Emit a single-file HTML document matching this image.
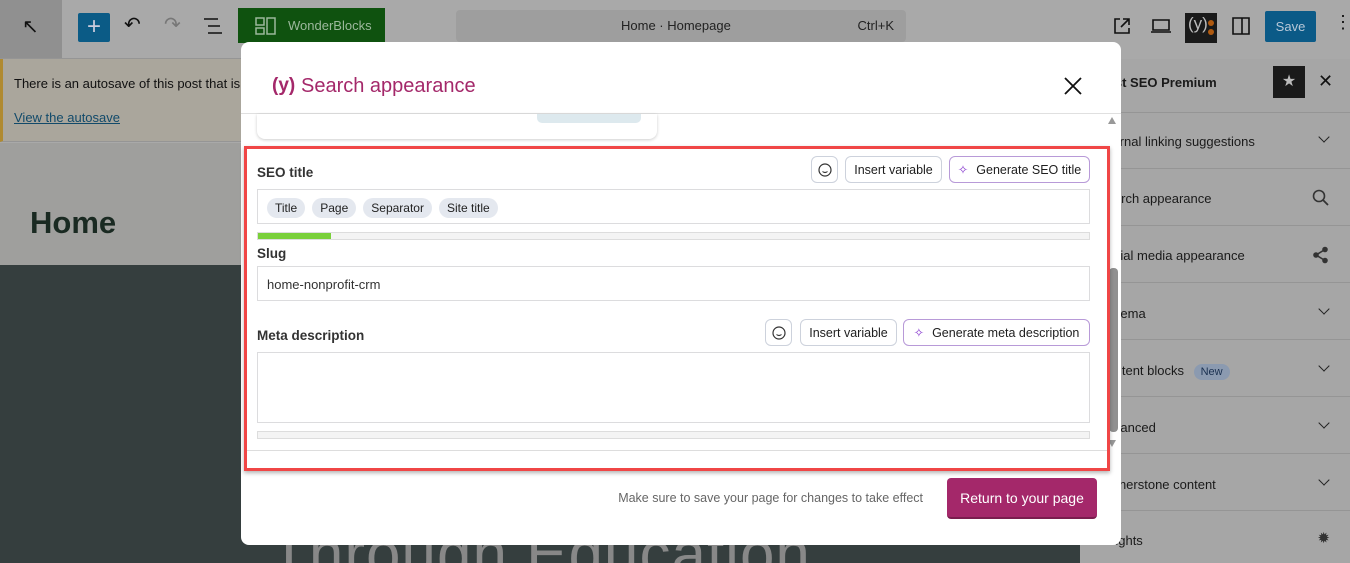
<!DOCTYPE html>
<html><head><meta charset="utf-8"><style>
*{box-sizing:border-box;margin:0;padding:0}
html,body{width:1350px;height:563px;overflow:hidden}
body{position:relative;font-family:"Liberation Sans",sans-serif;background:#a9a9a9;color:#1e1e1e}
.abs{position:absolute}
.sb-row{position:absolute;left:1080px;width:270px;border-top:1px solid #959595;font-size:13px;color:#1a1a1a}
.sb-row span{position:absolute;left:18px;white-space:nowrap}
.chev{position:absolute;right:22px;width:8px;height:8px;border-right:1.6px solid #222;border-bottom:1.6px solid #222;transform:rotate(45deg)}
.btn{position:absolute;border:1px solid #cdd2dc;border-radius:6px;background:#fff;font-size:12.5px;color:#1e1e1e;display:flex;align-items:center;justify-content:center;height:27px}
.lbl{position:absolute;left:257px;font-size:13.5px;font-weight:bold;color:#333}
.inp{position:absolute;left:257px;width:833px;border:1px solid #dcdcde;background:#fff}
.bar{position:absolute;left:257px;width:833px;height:8px;border:1px solid #ddd;background:#f4f4f4}
.pill{display:inline-block;background:#e4e8ef;border-radius:10px;padding:3px 8px;font-size:12px;margin-right:7px;color:#222}
</style></head><body>
<!-- top bar -->
<div class="abs" style="left:0;top:0;width:62px;height:58px;background:#909090"></div>
<div class="abs" style="left:22px;top:14px;font-size:20px;color:#111">↖</div>
<div class="abs" style="left:78px;top:13px;width:32px;height:29px;background:#0b5b86;border-radius:2px;color:#ccd;font-size:24px;text-align:center;line-height:28px">+</div>
<div class="abs" style="left:124px;top:12px;font-size:20px;color:#111">↶</div>
<div class="abs" style="left:164px;top:12px;font-size:20px;color:#777">↷</div>
<svg class="abs" style="left:203px;top:17px" width="20" height="18"><path d="M1 2h14M5 9h12M5 16h14" stroke="#111" stroke-width="1.6"/></svg>
<div class="abs" style="left:238px;top:8px;width:147px;height:35px;background:#0f520f;color:#9cb89c;font-size:13px;line-height:35px;padding-left:50px">WonderBlocks</div>
<svg class="abs" style="left:255px;top:17px" width="22" height="18"><g fill="none" stroke="#9cb89c" stroke-width="1.5"><rect x="1" y="1" width="8" height="7"/><rect x="1" y="11" width="8" height="6"/><rect x="12" y="1" width="8" height="16"/></g></svg>
<div class="abs" style="left:456px;top:10px;width:450px;height:32px;background:#9e9e9e;border-radius:4px;font-size:13px;line-height:32px;color:#222"><span style="position:absolute;left:165px">Home · Homepage</span><span style="position:absolute;right:12px">Ctrl+K</span></div>
<svg class="abs" style="left:1112px;top:16px" width="20" height="20"><path d="M8 3H3v14h14v-5M11 3h6v6M17 3l-8 8" fill="none" stroke="#111" stroke-width="1.6"/></svg>
<svg class="abs" style="left:1150px;top:18px" width="22" height="16"><path d="M3 2h16v10H3zM1 14h20" fill="none" stroke="#111" stroke-width="1.6"/></svg>
<div class="abs" style="left:1185px;top:13px;width:32px;height:30px;background:#1a1a1a"></div>
<div class="abs" style="left:1188px;top:14px;color:#bbb;font-size:17px">(y)</div>
<div class="abs" style="left:1208px;top:20px;width:6px;height:6px;border-radius:3px;background:#b05a10"></div>
<div class="abs" style="left:1208px;top:29px;width:6px;height:6px;border-radius:3px;background:#b05a10"></div>
<svg class="abs" style="left:1231px;top:16px" width="20" height="20"><path d="M2 2h16v16H2zM11 2v16" fill="none" stroke="#111" stroke-width="1.6"/></svg>
<div class="abs" style="left:1265px;top:11px;width:51px;height:31px;background:#0b5a87;border-radius:2px;color:#b8c8d8;font-size:13px;text-align:center;line-height:31px">Save</div>
<div class="abs" style="left:1334px;top:12px;font-size:18px;color:#111">⋮</div>
<div class="abs" style="left:0;top:58px;width:1080px;height:1px;background:#959595"></div>
<!-- left content -->
<div class="abs" style="left:0;top:59px;width:1080px;height:83px;background:#aaa69c;border-left:3px solid #b08a30;border-bottom:1px solid #959595"></div>
<div class="abs" style="left:14px;top:76px;font-size:13px;color:#111">There is an autosave of this post that is</div>
<div class="abs" style="left:14px;top:110px;font-size:13px;color:#124a6a;text-decoration:underline">View the autosave</div>
<div class="abs" style="left:0;top:143px;width:1080px;height:122px;background:#9f9f9d"></div>
<div class="abs" style="left:30px;top:205px;font-size:31px;font-weight:bold;color:#1a2a22">Home</div>
<div class="abs" style="left:0;top:265px;width:1080px;height:298px;background:#353e3e"></div>
<div class="abs" style="left:270px;top:520px;font-size:62px;line-height:70px;color:#888;letter-spacing:1px;white-space:nowrap">Through Education</div>
<!-- sidebar -->
<div class="abs" style="left:1080px;top:59px;width:270px;height:504px;background:#a6a6a6"></div>
<div class="abs" style="left:1092px;top:75px;font-size:13px;font-weight:bold;color:#1a1a1a">Yoast SEO Premium</div>
<div class="abs" style="left:1273px;top:66px;width:32px;height:32px;background:#1a1a1a;color:#bbb;text-align:center;line-height:32px;font-size:16px">★</div>
<div class="abs" style="left:1318px;top:71px;font-size:18px;color:#111">✕</div>
<div class="sb-row" style="top:112px;height:56px"><span style="top:21px">Internal linking suggestions</span><i class="chev" style="top:20px"></i></div>
<div class="sb-row" style="top:168px;height:57px"><span style="top:22px">Search appearance</span><svg style="position:absolute;right:20px;top:20px" width="18" height="18"><circle cx="7" cy="7" r="5.5" fill="none" stroke="#333" stroke-width="1.6"/><path d="M11 11l5 5" stroke="#333" stroke-width="1.8"/></svg></div>
<div class="sb-row" style="top:225px;height:57px"><span style="top:22px">Social media appearance</span><svg style="position:absolute;right:20px;top:20px" width="18" height="18"><circle cx="13" cy="3.5" r="2.8" fill="#333"/><circle cx="4" cy="9" r="2.8" fill="#333"/><circle cx="13" cy="14.5" r="2.8" fill="#333"/><path d="M13 3.5L4 9l9 5.5" stroke="#333" stroke-width="1.6" fill="none"/></svg></div>
<div class="sb-row" style="top:282px;height:57px"><span style="top:23px">Schema</span><i class="chev" style="top:22px"></i></div>
<div class="sb-row" style="top:339px;height:57px"><span style="top:23px">Content blocks <b style="font-weight:normal;background:#8b9ab0;color:#1a3050;border-radius:9px;padding:2px 7px;font-size:11px;margin-left:6px">New</b></span><i class="chev" style="top:22px"></i></div>
<div class="sb-row" style="top:396px;height:57px"><span style="top:23px">Advanced</span><i class="chev" style="top:22px"></i></div>
<div class="sb-row" style="top:453px;height:57px"><span style="top:23px">Cornerstone content</span><i class="chev" style="top:22px"></i></div>
<div class="sb-row" style="top:510px;height:53px"><span style="top:22px">Insights</span><span style="left:auto;right:20px;top:18px;font-size:15px;color:#333">✹</span></div>
<!-- modal -->
<div class="abs" style="left:241px;top:42px;width:880px;height:503px;background:#fff;border-radius:8px;overflow:hidden">
  <div class="abs" style="left:0;top:71px;width:880px;height:1px;background:#e0e0e0"></div>
</div>
<div class="abs" style="left:272px;top:75px;font-size:19px;color:#a4286a;font-weight:bold">(y)</div>
<div class="abs" style="left:301px;top:75px;font-size:20px;color:#a4286a">Search appearance</div>
<svg class="abs" style="left:1064px;top:77px" width="18" height="18"><path d="M1 1l16 16M17 1L1 17" stroke="#111" stroke-width="1.8"/></svg>
<div class="abs" style="left:257px;top:114px;width:400px;height:25px;background:#fff;border-radius:0 0 8px 8px;box-shadow:0 1px 3px rgba(0,0,0,.2)"></div>
<div class="abs" style="left:537px;top:114px;width:104px;height:9px;background:#dde9ee;border-radius:0 0 5px 5px"></div>
<!-- scrollbar -->
<div class="abs" style="left:1108px;top:117px;width:0;height:0;border-left:4px solid transparent;border-right:4px solid transparent;border-bottom:7px solid #999"></div>
<div class="abs" style="left:1109px;top:268px;width:9px;height:164px;background:#909090;border-radius:4px"></div>
<div class="abs" style="left:1108px;top:440px;width:0;height:0;border-left:4px solid transparent;border-right:4px solid transparent;border-top:7px solid #999"></div>
<!-- fields -->
<div class="lbl" style="top:165px">SEO title</div>
<div class="btn" style="left:811px;top:156px;width:27px"><svg width="14" height="14"><circle cx="7" cy="7" r="6" fill="none" stroke="#333" stroke-width="1.2"/><path d="M4.5 8.5q2.5 2 5 0" fill="none" stroke="#333" stroke-width="1.1"/></svg></div>
<div class="btn" style="left:845px;top:156px;width:97px">Insert variable</div>
<div class="btn" style="left:949px;top:156px;width:141px;border-color:#b89ad8"><span style="color:#8a3fd0;margin-right:8px">✧</span>Generate SEO title</div>
<div class="inp" style="top:189px;height:35px;padding:8px 0 0 9px"><span class="pill">Title</span><span class="pill">Page</span><span class="pill">Separator</span><span class="pill">Site title</span></div>
<div class="bar" style="top:232px"><div style="width:73px;height:6px;background:#7ad03a"></div></div>
<div class="lbl" style="top:246px">Slug</div>
<div class="inp" style="top:266px;height:35px;font-size:13px;padding:10px 0 0 9px;color:#333">home-nonprofit-crm</div>
<div class="lbl" style="top:328px">Meta description</div>
<div class="btn" style="left:765px;top:319px;width:27px"><svg width="14" height="14"><circle cx="7" cy="7" r="6" fill="none" stroke="#333" stroke-width="1.2"/><path d="M4.5 8.5q2.5 2 5 0" fill="none" stroke="#333" stroke-width="1.1"/></svg></div>
<div class="btn" style="left:800px;top:319px;width:97px">Insert variable</div>
<div class="btn" style="left:903px;top:319px;width:187px;border-color:#b89ad8"><span style="color:#8a3fd0;margin-right:8px">✧</span>Generate meta description</div>
<div class="inp" style="top:352px;height:71px"></div>
<div class="bar" style="top:431px"></div>
<div class="abs" style="left:244px;top:450px;width:864px;height:1px;background:#ddd"></div>
<!-- red box -->
<div class="abs" style="left:244px;top:146px;width:866px;height:325px;border:3px solid #f04646;box-shadow:0 2px 4px rgba(0,0,0,.3)"></div>
<!-- footer -->
<div class="abs" style="left:560px;top:491px;width:363px;text-align:right;font-size:12.5px;color:#666">Make sure to save your page for changes to take effect</div>
<div class="abs" style="left:947px;top:478px;width:150px;height:41px;background:#a4286a;border-radius:4px;color:#fff;font-size:14px;text-align:center;line-height:40px;border-bottom:2px solid #7a1d4e">Return to your page</div>
</body></html>
